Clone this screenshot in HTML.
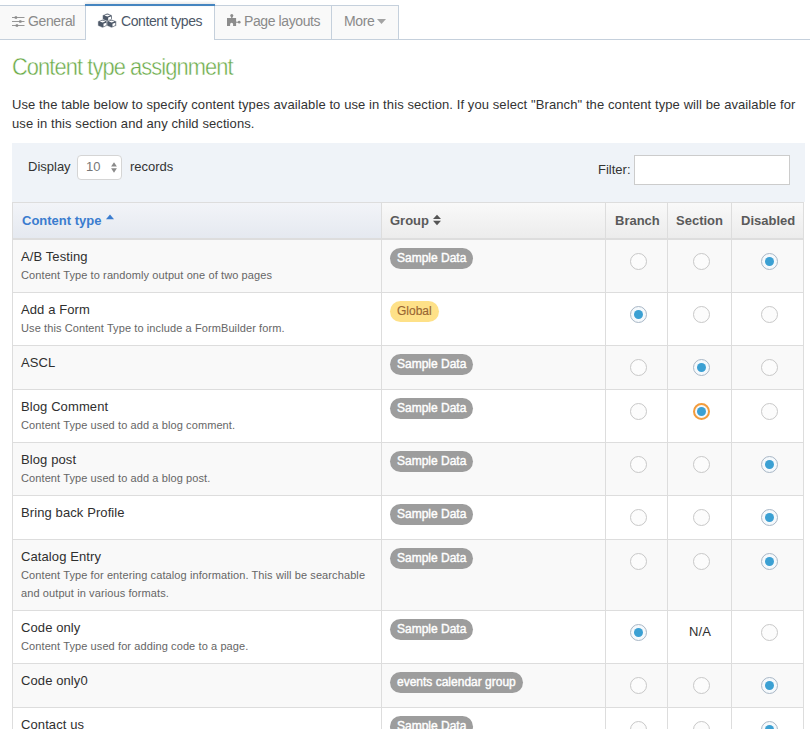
<!DOCTYPE html><html><head><meta charset="utf-8"><title>Content types</title><style>
*{margin:0;padding:0;box-sizing:border-box}
html,body{width:810px;height:729px;overflow:hidden;background:#fff}
body{position:relative;font-family:"Liberation Sans",sans-serif;color:#333}
.a{position:absolute;white-space:nowrap}
.tab{position:absolute;top:5px;height:35px;background:#f9f9f9;border:1px solid #c5d0dc;border-bottom:none}
.tabline{position:absolute;left:0;top:39px;width:810px;height:1px;background:#c5d0dc}
.tt{position:absolute;font-size:14px;line-height:14px;color:#8a8a8a;white-space:nowrap;letter-spacing:-0.4px}
.h1{position:absolute;left:11.6px;top:55px;font-size:24px;line-height:24px;color:#69aa46;white-space:nowrap;transform-origin:0 0;transform:scaleX(0.91);letter-spacing:-1px;font-weight:400;-webkit-text-stroke:0.45px #fff}
.p{position:absolute;left:12px;font-size:13px;line-height:13px;color:#333;white-space:nowrap;letter-spacing:0.095px}
.wrap{position:absolute;left:12px;top:143px;width:793px;height:59px;background:#eff3f8}
.hl{position:absolute;left:12px;width:792px;height:1px;background:#ddd}
.vl{position:absolute;top:202px;width:1px;height:530px;background:#ddd}
.row{position:absolute;left:12px;width:792px}
.odd{background:#f9f9f9}
.even{background:#fff}
.ti{position:absolute;font-size:13px;line-height:13px;color:#2f2f2f;white-space:nowrap;letter-spacing:0.1px}
.de{position:absolute;font-size:11px;line-height:11px;color:#666;white-space:nowrap;letter-spacing:0.1px}
.bd{position:absolute;height:21px;border-radius:11px;font-size:12px;font-weight:400;line-height:21px;padding:0 7px;white-space:nowrap;color:#fff;background:#9d9d9d;-webkit-text-stroke:0.4px #fff}
.bd.y{background:#fee188;color:#996633;-webkit-text-stroke:0.15px #996633}
.r{position:absolute;width:17px;height:17px;border-radius:50%;border:1px solid #c8c8c8;background:#fcfcfc}
.r.c{border-color:#a9b7c6;background:#f5f9fc}
.r.c:after{content:"";position:absolute;left:3px;top:3px;width:9px;height:9px;border-radius:50%;background:#3ba0d3}
.r.f{border:2px solid #f39c3c}
.r.f:after{left:2px;top:2px}
.th{position:absolute;top:203px;height:35px}
.thb{background:linear-gradient(#f2f4f8,#e5e9f0)}
.thg{background:linear-gradient(#f9f9f9,#ececec)}
.tht{position:absolute;font-size:13px;line-height:13px;font-weight:700;color:#5a5a5a;white-space:nowrap}
</style></head><body>
<div class="tab" style="left:-10px;width:96px;height:35px"></div>
<div class="tab" style="left:214px;width:118px"></div>
<div class="tab" style="left:331px;width:68px"></div>
<div class="tabline"></div>

<div style="position:absolute;left:86px;top:4px;width:128px;height:36px;background:#fff"></div><div style="position:absolute;left:85px;top:4px;width:130px;height:2px;background:#4585c0;box-shadow:0 -1px 3px rgba(0,0,0,0.15)"></div>
<svg class="a" style="left:12px;top:16px" width="13" height="11" viewBox="0 0 13 11"><g fill="#8c8c8c"><rect x="0" y="1.1" width="12.5" height="0.9"/><rect x="0" y="5.1" width="12.5" height="0.9"/><rect x="0" y="9.1" width="12.5" height="0.9"/><rect x="2.7" y="0.2" width="2.4" height="2.6" rx="0.5"/><rect x="7.1" y="4.2" width="2.4" height="2.6" rx="0.5"/><rect x="3.7" y="8.2" width="2.4" height="2.6" rx="0.5"/></g></svg>
<div class="tt" style="left:28px;top:14px">General</div>
<svg class="a" style="left:94px;top:10px" width="28" height="22" viewBox="94 10 28 22"><path d="M107.30 13.30 L112.00 15.20 L112.00 19.70 L107.30 21.60 L102.60 19.70 L102.60 15.20Z" fill="#4d5868" stroke="#fff" stroke-width="0.5"/><path d="M107.30 14.40 L110.20 15.40 L107.30 16.40 L104.40 15.40Z M108.20 17.60 L111.00 16.60 L111.00 19.10 L108.20 20.30Z" fill="#fff"/><path d="M102.60 19.40 L107.30 21.30 L107.30 25.80 L102.60 27.70 L97.90 25.80 L97.90 21.30Z" fill="#4d5868" stroke="#fff" stroke-width="0.5"/><path d="M102.60 20.50 L105.50 21.50 L102.60 22.50 L99.70 21.50Z M103.50 23.70 L106.30 22.70 L106.30 25.20 L103.50 26.40Z" fill="#fff"/><path d="M111.60 19.40 L116.30 21.30 L116.30 25.80 L111.60 27.70 L106.90 25.80 L106.90 21.30Z" fill="#4d5868" stroke="#fff" stroke-width="0.5"/><path d="M111.60 20.50 L114.50 21.50 L111.60 22.50 L108.70 21.50Z M112.50 23.70 L115.30 22.70 L115.30 25.20 L112.50 26.40Z" fill="#fff"/></svg>
<div class="tt" style="left:121px;top:14px;color:#4d5868">Content types</div>
<svg class="a" style="left:222px;top:10px" width="22" height="20" viewBox="222 10 22 20"><g fill="#8c8c8c"><path d="M227 18 H236.1 V25.9 H233.1 V24.2 A1.5 1.5 0 0 0 230.1 24.2 V25.9 H227Z"/><circle cx="231.8" cy="15.6" r="1.55"/><rect x="231.15" y="16" width="1.3" height="2.2"/><rect x="236" y="21.7" width="2.2" height="1"/><circle cx="239.2" cy="22.2" r="1.35"/></g></svg>
<div class="tt" style="left:244px;top:14px">Page layouts</div>
<div class="tt" style="left:344px;top:14px">More</div>
<svg class="a" style="left:377px;top:19px" width="9" height="5" viewBox="0 0 9 5"><path d="M0 0H9L4.5 5Z" fill="#a3a3a3"/></svg>
<div class="h1">Content type assignment</div>
<div class="p" style="top:98px">Use the table below to specify content types available to use in this section. If you select "Branch" the content type will be available for</div>
<div class="p" style="top:117px">use in this section and any child sections.</div>
<div class="wrap"></div>
<div class="p" style="left:28px;top:160px;letter-spacing:0">Display</div>
<div class="a" style="left:77px;top:155px;width:45px;height:25px;border:1px solid #d5d5d5;border-radius:4px;background:#fff"></div>
<div class="a" style="left:86px;top:160px;font-size:13px;line-height:13px;color:#777">10</div>
<svg class="a" style="left:111px;top:162px" width="7" height="11" viewBox="0 0 7 11"><path d="M0.1 4.4 L3 0.2 L5.9 4.4Z M0.1 6.3 L3 10.8 L5.9 6.3Z" fill="#8a8a8a"/></svg>
<div class="p" style="left:130px;top:160px;letter-spacing:0">records</div>
<div class="p" style="left:598px;top:163px;letter-spacing:0">Filter:</div>
<div class="a" style="left:634px;top:155px;width:156px;height:30px;border:1px solid #ccc;background:#fff"></div>
<div class="row odd" style="top:240px;height:52px"></div>
<div class="row even" style="top:293px;height:52px"></div>
<div class="row odd" style="top:346px;height:43px"></div>
<div class="row even" style="top:390px;height:52px"></div>
<div class="row odd" style="top:443px;height:52px"></div>
<div class="row even" style="top:496px;height:43px"></div>
<div class="row odd" style="top:540px;height:70px"></div>
<div class="row even" style="top:611px;height:52px"></div>
<div class="row odd" style="top:664px;height:43px"></div>
<div class="row even" style="top:708px;height:21px"></div>
<div class="th thb" style="left:13px;width:368px"></div>
<div class="th thg" style="left:382px;width:223px"></div>
<div class="th thg" style="left:606px;width:61px"></div>
<div class="th thg" style="left:668px;width:63px"></div>
<div class="th thg" style="left:732px;width:71px"></div>
<div class="hl" style="top:202px"></div>
<div class="hl" style="top:238px;height:2px"></div>
<div class="hl" style="top:292px"></div>
<div class="hl" style="top:345px"></div>
<div class="hl" style="top:389px"></div>
<div class="hl" style="top:442px"></div>
<div class="hl" style="top:495px"></div>
<div class="hl" style="top:539px"></div>
<div class="hl" style="top:610px"></div>
<div class="hl" style="top:663px"></div>
<div class="hl" style="top:707px"></div>
<div class="vl" style="left:12px"></div>
<div class="vl" style="left:381px"></div>
<div class="vl" style="left:605px"></div>
<div class="vl" style="left:667px"></div>
<div class="vl" style="left:731px"></div>
<div class="vl" style="left:803px"></div>
<div class="tht" style="left:22px;top:214px;color:#3a7ccf">Content type</div>
<svg class="a" style="left:106px;top:214px" width="8" height="6" viewBox="0 0 8 6"><path d="M0 5.2 L4 0.6 L8 5.2Z" fill="#3a7ccf"/></svg>
<div class="tht" style="left:390px;top:214px">Group</div>
<svg class="a" style="left:433px;top:214px" width="8" height="12" viewBox="0 0 8 12"><path d="M0 5 L4 0.7 L8 5Z M0 6.8 L4 11.3 L8 6.8Z" fill="#555"/></svg>
<div class="tht" style="left:615px;top:214px">Branch</div>
<div class="tht" style="left:676px;top:214px">Section</div>
<div class="tht" style="left:741px;top:214px">Disabled</div>
<div class="ti" style="left:21px;top:250px">A/B Testing</div>
<div class="de" style="left:21px;top:270px">Content Type to randomly output one of two pages</div>
<div class="bd" style="left:390px;top:248px">Sample Data</div>
<div class="r" style="left:630.0px;top:252.5px"></div>
<div class="r" style="left:693.0px;top:252.5px"></div>
<div class="r c" style="left:761.0px;top:252.5px"></div>
<div class="ti" style="left:21px;top:303px">Add a Form</div>
<div class="de" style="left:21px;top:323px">Use this Content Type to include a FormBuilder form.</div>
<div class="bd y" style="left:390px;top:301px">Global</div>
<div class="r c" style="left:630.0px;top:305.5px"></div>
<div class="r" style="left:693.0px;top:305.5px"></div>
<div class="r" style="left:761.0px;top:305.5px"></div>
<div class="ti" style="left:21px;top:356px">ASCL</div>
<div class="bd" style="left:390px;top:354px">Sample Data</div>
<div class="r" style="left:630.0px;top:358.5px"></div>
<div class="r c" style="left:693.0px;top:358.5px"></div>
<div class="r" style="left:761.0px;top:358.5px"></div>
<div class="ti" style="left:21px;top:400px">Blog Comment</div>
<div class="de" style="left:21px;top:420px">Content Type used to add a blog comment.</div>
<div class="bd" style="left:390px;top:398px">Sample Data</div>
<div class="r" style="left:630.0px;top:402.5px"></div>
<div class="r c f" style="left:693.0px;top:402.5px"></div>
<div class="r" style="left:761.0px;top:402.5px"></div>
<div class="ti" style="left:21px;top:453px">Blog post</div>
<div class="de" style="left:21px;top:473px">Content Type used to add a blog post.</div>
<div class="bd" style="left:390px;top:451px">Sample Data</div>
<div class="r" style="left:630.0px;top:455.5px"></div>
<div class="r" style="left:693.0px;top:455.5px"></div>
<div class="r c" style="left:761.0px;top:455.5px"></div>
<div class="ti" style="left:21px;top:506px">Bring back Profile</div>
<div class="bd" style="left:390px;top:504px">Sample Data</div>
<div class="r" style="left:630.0px;top:508.5px"></div>
<div class="r" style="left:693.0px;top:508.5px"></div>
<div class="r c" style="left:761.0px;top:508.5px"></div>
<div class="ti" style="left:21px;top:550px">Catalog Entry</div>
<div class="de" style="left:21px;top:570px">Content Type for entering catalog information. This will be searchable</div>
<div class="de" style="left:21px;top:588px">and output in various formats.</div>
<div class="bd" style="left:390px;top:548px">Sample Data</div>
<div class="r" style="left:630.0px;top:552.5px"></div>
<div class="r" style="left:693.0px;top:552.5px"></div>
<div class="r c" style="left:761.0px;top:552.5px"></div>
<div class="ti" style="left:21px;top:621px">Code only</div>
<div class="de" style="left:21px;top:641px">Content Type used for adding code to a page.</div>
<div class="bd" style="left:390px;top:619px">Sample Data</div>
<div class="r c" style="left:630.0px;top:623.5px"></div>
<div class="ti" style="left:689px;top:625px">N/A</div>
<div class="r" style="left:761.0px;top:623.5px"></div>
<div class="ti" style="left:21px;top:674px">Code only0</div>
<div class="bd" style="left:390px;top:672px">events calendar group</div>
<div class="r" style="left:630.0px;top:676.5px"></div>
<div class="r" style="left:693.0px;top:676.5px"></div>
<div class="r c" style="left:761.0px;top:676.5px"></div>
<div class="ti" style="left:21px;top:718px">Contact us</div>
<div class="bd" style="left:390px;top:716px">Sample Data</div>
<div class="r" style="left:630.0px;top:720.5px"></div>
<div class="r" style="left:693.0px;top:720.5px"></div>
<div class="r c" style="left:761.0px;top:720.5px"></div>
</body></html>
